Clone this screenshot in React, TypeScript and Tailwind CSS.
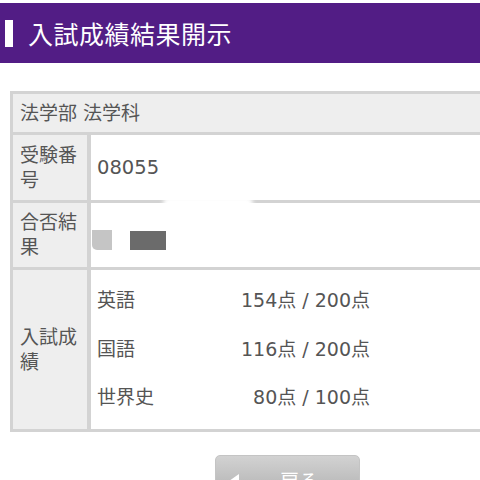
import React from "react";

const font = { fontFamily: '"DejaVu Sans", "Noto Sans CJK JP", sans-serif' };
const titleFont = { fontFamily: '"Noto Sans CJK JP", sans-serif' };

export default function App() {
  const scores = [
    { s: "英語", v: "154点 / 200点" },
    { s: "国語", v: "116点 / 200点" },
    { s: "世界史", v: "80点 / 100点" },
  ];
  return (
    <div className="w-[480px] h-[480px] overflow-hidden bg-white text-[#555555]" style={font}>
      <div className="mt-[3px] h-[60px] bg-[#521d85] flex items-center">
        <div className="ml-[5px] w-[8px] h-[27px] bg-white" />
        <div className="ml-[15px] text-white text-[25px] leading-none tracking-[0.5px]" style={titleFont}>
          入試成績結果開示
        </div>
      </div>
      <div className="mt-[28px] ml-[10px] w-[500px] border-[3px] border-[#d3d3d3] text-[19px]">
        <div className="h-[41px] bg-[#eeeeee] border-b-[3px] border-[#d3d3d3] flex items-center pl-[7px] leading-none">
          法学部 法学科
        </div>
        <div className="flex h-[68px] border-b-[3px] border-[#d3d3d3]">
          <div className="w-[78px] shrink-0 bg-[#eeeeee] border-r-[4px] border-[#d3d3d3] flex items-center pl-[7px] pr-[2px] leading-[25px]">
            受験番号
          </div>
          <div className="flex-1 flex items-center pl-[6px] text-[19.5px]">08055</div>
        </div>
        <div className="relative flex h-[67px] border-b-[3px] border-[#d3d3d3]">
          <div className="w-[78px] shrink-0 bg-[#eeeeee] border-r-[4px] border-[#d3d3d3] flex items-center pl-[7px] pr-[2px] leading-[25px]">
            合否結果
          </div>
          <div className="flex-1 flex items-center pl-[1px] pt-[10px] gap-[18px]">
            <div className="w-[20px] h-[20px] bg-[#c5c5c5] rounded-bl-[5px]" />
            <div className="w-[36px] h-[19px] bg-[#6b6b6b]" />
          </div>
          <div className="absolute left-[150px] top-[-6px] w-[90px] h-[12px] rounded-full bg-white blur-[2px]" />
        </div>
        <div className="flex h-[159px]">
          <div className="w-[78px] shrink-0 bg-[#eeeeee] border-r-[4px] border-[#d3d3d3] flex items-center pl-[7px] pr-[2px] leading-[25px]">
            入試成績
          </div>
          <div className="flex-1 pl-[6px] pt-[6px]">
            {scores.map((r) => (
              <div key={r.s} className="h-[48.5px] w-[273px] flex items-center justify-between">
                <span>{r.s}</span>
                <span>{r.v}</span>
              </div>
            ))}
          </div>
        </div>
      </div>
      <div className="mt-[23px] ml-[215px] w-[145px] h-[52px] rounded-[5px] border border-[#c4c4c4] bg-gradient-to-b from-[#d2d2d2] to-[#a9a9a9] flex items-center text-white text-[19px]">
        <div className="ml-[13px] w-0 h-0 border-y-[7px] border-y-transparent border-r-[10px] border-r-white" />
        <div className="ml-[41px]">戻る</div>
      </div>
    </div>
  );
}
